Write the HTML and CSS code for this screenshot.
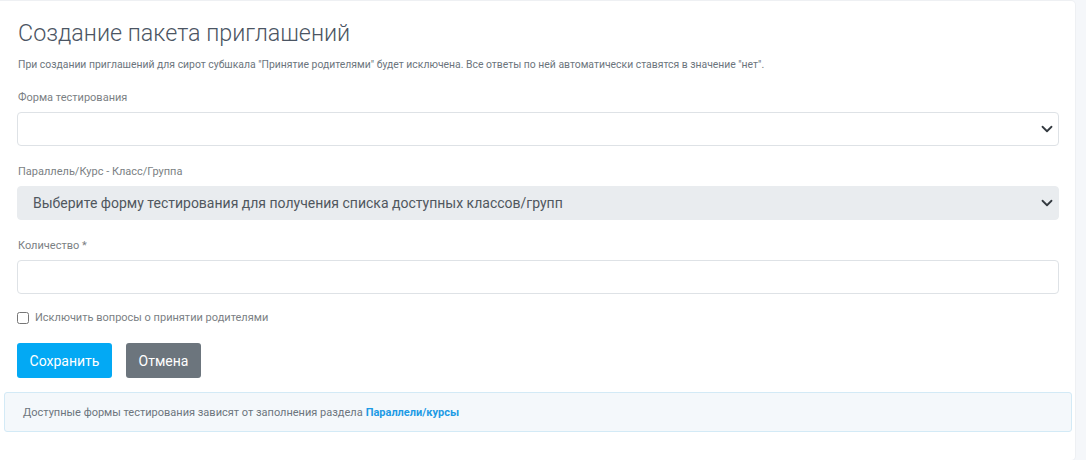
FILE: index.html
```html
<!DOCTYPE html>
<html lang="ru">
<head>
  <meta charset="UTF-8">
  <title>Создание пакета приглашений</title>
  <link rel="stylesheet" href="styles.css">
</head>
<body>
  <div class="card">
    <h1 class="title">Создание пакета приглашений</h1>
    <p class="hint">При создании приглашений для сирот субшкала "Принятие родителями" будет исключена. Все ответы по ней автоматически ставятся в значение "нет".</p>

    <form class="form">
      <div class="form-group">
        <label for="form-type">Форма тестирования</label>
        <div class="select">
          <select id="form-type"></select>
        </div>
      </div>
      <div class="form-group">
        <label for="group">Параллель/Курс - Класс/Группа</label>
        <div class="select disabled">
          <select id="group" disabled>
            <option>Выберите форму тестирования для получения списка доступных классов/групп</option>
          </select>
        </div>
      </div>
      <div class="form-group form-group-last">
        <label for="count">Количество *</label>
        <input type="text" id="count" class="input">
      </div>
      <div class="check">
        <input type="checkbox" id="exclude">
        <label for="exclude">Исключить вопросы о принятии родителями</label>
      </div>
      <div class="actions">
        <button type="submit" class="btn btn-primary">Сохранить</button>
        <button type="button" class="btn btn-secondary">Отмена</button>
      </div>
    </form>

    <div class="alert">
      Доступные формы тестирования зависят от заполнения раздела <a href="#">Параллели/курсы</a>
    </div>
  </div>
</body>
</html>
```

FILE: styles.css
```css
body {
  margin: 0;
  background-color: #f5f7fa;
  font-family: Roboto, "Liberation Sans", sans-serif;
  color: #495057;
}
.card {
  width: 1075px;
  height: 459px;
  background: #fff;
  border: 1px solid #eef0f3;
  border-left: none;
  border-radius: 0 5px 5px 0;
}
.title {
  margin: 18px 0 0 18px;
  font-size: 23.3px;
  font-weight: 300;
  line-height: 28px;
  color: #4b5563;
}
.hint {
  margin: 12px 0 0 18px;
  font-size: 10.4px;
  line-height: 12px;
  color: #6c757d;
}
.form {
  padding: 0 17px;
  margin-top: 20px;
}
.form-group {
  margin-bottom: 19px;
}
.form-group-last {
  margin-bottom: 17px;
}
.form-group label {
  display: block;
  margin: 0 0 7px 1px;
  font-size: 11px;
  line-height: 14px;
  color: #7b7f84;
}
.select {
  position: relative;
}
.select::after {
  content: "";
  position: absolute;
  right: 5px;
  top: 11px;
  width: 12px;
  height: 12px;
  background: url("data:image/svg+xml,%3csvg xmlns='http://www.w3.org/2000/svg' viewBox='0 0 16 16'%3e%3cpath fill='none' stroke='%23343a40' stroke-linecap='round' stroke-linejoin='round' stroke-width='2.4' d='m2 5 6 6 6-6'/%3e%3c/svg%3e") no-repeat center / 12px 12px;
  pointer-events: none;
}
.select select,
.input {
  display: block;
  box-sizing: border-box;
  width: 1042px;
  height: 34px;
  padding: 0 15px;
  border: 1px solid #dee2e6;
  border-radius: 4px;
  background: #fff;
  font-family: inherit;
  font-size: 14px;
  color: #495057;
  appearance: none;
  -webkit-appearance: none;
}
.select.disabled select {
  background: #e9ecef;
  border-color: #e9ecef;
  color: #50575e;
  opacity: 1;
}
.check {
  display: flex;
  align-items: center;
  gap: 6px;
}
.check input {
  margin: 0;
  width: 12px;
  height: 12px;
}
.check label {
  font-size: 11px;
  color: #7b7f84;
}
.actions {
  display: flex;
  gap: 14px;
  margin-top: 19px;
}
.btn {
  height: 35px;
  padding: 0 12px;
  border: none;
  border-radius: 3px;
  font-family: inherit;
  font-size: 14px;
  color: #fff;
  cursor: pointer;
}
.btn-primary {
  background-color: #03a9f4;
  width: 95px;
}
.btn-secondary {
  background-color: #6c757d;
  width: 75px;
}
.alert {
  margin: 14px 0 0 4px;
  width: 1068px;
  height: 40px;
  padding: 0 0 0 18px;
  box-sizing: border-box;
  display: flex;
  align-items: center;
  background: #f4f8fb;
  border: 1px solid #d3eaf6;
  border-radius: 3px;
  font-size: 11px;
  color: #6c757d;
}
.alert a {
  margin-left: 3px;
  color: #1d9be5;
  font-weight: 700;
  text-decoration: none;
}
```
